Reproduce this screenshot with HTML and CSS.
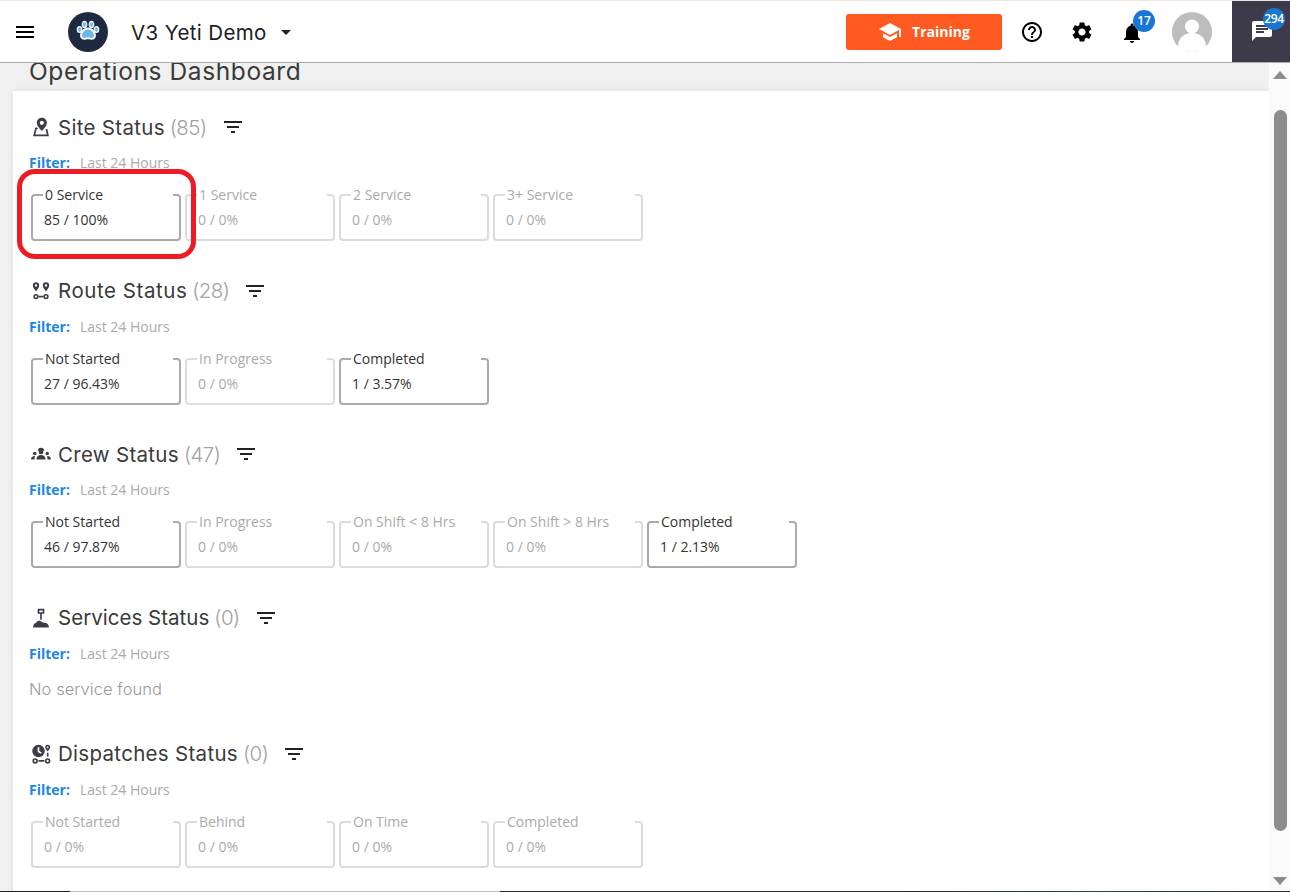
FILE: index.html
```html
<!DOCTYPE html>
<html lang="en">
<head>
<meta charset="utf-8">
<title>Operations Dashboard</title>
<link rel="stylesheet" href="styles.css">
</head>
<body>
<div class="app">
  <header class="topbar">
    <div class="brand">
      <svg class="icon menu-icon" viewBox="0 0 24 24"><path d="M3 18h18v-2H3v2zm0-5h18v-2H3v2zm0-7v2h18V6H3z"/></svg>
      <svg class="logo" viewBox="0 0 40 40"><circle cx="20" cy="20" r="20" fill="#1e2a40"/><g fill="#f4f8fb"><ellipse cx="11.500" cy="17.500" rx="2.800" ry="3.600"/><ellipse cx="16.500" cy="12.500" rx="2.800" ry="3.800"/><ellipse cx="23.500" cy="12.500" rx="2.800" ry="3.800"/><ellipse cx="28.500" cy="17.500" rx="2.800" ry="3.600"/><path d="M20 15.500c-4.500 0-8 4.500-8 8 0 3.500 3.500 5 6 4 1.300-.5 2.700-.5 4 0 2.500 1 6 -.5 6-4 0-3.500-3.500-8-8-8z"/></g><g fill="#6cb9ea"><ellipse cx="11.500" cy="17.500" rx="1.500" ry="2.200"/><ellipse cx="16.500" cy="12.500" rx="1.500" ry="2.400"/><ellipse cx="23.500" cy="12.500" rx="1.500" ry="2.400"/><ellipse cx="28.500" cy="17.500" rx="1.500" ry="2.200"/><path d="M20 17.500c-3.400 0-6 3.400-6 6 0 2.200 2.200 2.800 3.500 2.200 1.600-.7 3.400-.7 5 0 1.300.6 3.500 0 3.500-2.200 0-2.600-2.600-6-6-6z"/></g></svg>
      <span class="org-name">V3 Yeti Demo</span>
      <span class="caret"></span>
    </div>
    <div class="actions">
      <button class="training" type="button">
        <svg class="hat" viewBox="0 0 24 24"><path d="M5 13.18v4L12 21l7-3.820v-4L12 17l-7-3.820zM12 3L1 9l11 6 9-4.910V17h2V9L12 3z"/></svg>
        <span>Training</span>
      </button>
      <svg class="icon action-icon" viewBox="0 0 24 24"><path d="M11 18h2v-2h-2v2zm1-16C6.480 2 2 6.480 2 12s4.480 10 10 10 10-4.480 10-10S17.520 2 12 2zm0 18c-4.410 0-8-3.590-8-8s3.590-8 8-8 8 3.590 8 8-3.590 8-8 8zm0-14c-2.210 0-4 1.790-4 4h2c0-1.100.9-2 2-2s2 .9 2 2c0 2-3 1.750-3 5h2c0-2.250 3-2.500 3-5 0-2.210-1.790-4-4-4z"/></svg>
      <svg class="icon action-icon" viewBox="0 0 24 24"><path d="M19.140 12.940c.04-.3.060-.61.060-.94 0-.32-.02-.64-.07-.94l2.030-1.580c.18-.14.23-.41.120-.61l-1.920-3.320c-.12-.22-.37-.29-.59-.22l-2.390.96c-.5-.38-1.030-.7-1.620-.94l-.36-2.540c-.04-.24-.24-.41-.48-.41h-3.840c-.24 0-.43.170-.47.410l-.36 2.540c-.59.24-1.130.57-1.620.94l-2.390-.96c-.22-.08-.47 0-.59.220L2.740 8.870c-.12.210-.08.470.12.610l2.030 1.580c-.05.3-.09.630-.09.940s.02.640.07.940l-2.030 1.580c-.18.140-.23.410-.12.610l1.920 3.320c.12.220.37.290.59.220l2.390-.96c.5.380 1.030.7 1.620.94l.36 2.540c.05.240.24.410.48.410h3.840c.24 0 .44-.17.47-.41l.36-2.540c.59-.24 1.130-.56 1.620-.94l2.390.96c.22.080.47 0 .59-.22l1.920-3.320c.12-.22.070-.47-.12-.61l-2.010-1.580zM12 15.600c-1.980 0-3.600-1.620-3.600-3.600s1.620-3.600 3.600-3.600 3.600 1.620 3.600 3.600-1.620 3.600-3.600 3.600z"/></svg>
      <span class="bell">
        <svg class="icon action-icon" viewBox="0 0 24 24"><path d="M12 22c1.100 0 2-.9 2-2h-4c0 1.100.89 2 2 2zm6-6v-5c0-3.070-1.640-5.640-4.500-6.320V4c0-.83-.67-1.500-1.500-1.500s-1.500.67-1.500 1.500v.68C7.630 5.360 6 7.920 6 11v5l-2 2v1h16v-1l-2-2z"/></svg>
        <span class="badge bell-badge">17</span>
      </span>
      <svg class="avatar" viewBox="0 0 40 40"><circle cx="20" cy="20" r="20" fill="#bdbdbd"/><circle cx="20" cy="14.500" r="7" fill="#fff"/><path d="M6 35c0-9 6-14 14-14s14 5 14 14c-3.600 3.200-8.500 5-14 5S9.600 38.200 6 35z" fill="#fff"/></svg>
      <div class="chat">
        <svg class="chat-icon" viewBox="0 0 24 24"><path d="M20 2H4c-1.100 0-1.990.9-1.990 2L2 22l4-4h14c1.100 0 2-.9 2-2V4c0-1.100-.9-2-2-2zM6 9h12v2H6V9zm8 5H6v-2h8v2zm4-6H6V6h12v2z"/></svg>
        <span class="badge chat-badge">294</span>
      </div>
    </div>
  </header>

  <div class="body">
    <main class="content">
      <h1 class="page-title">Operations Dashboard</h1>
      <div class="card">
        <section class="section">
          <h2 class="section-head">
            <svg class="sec-icon" viewBox="0 0 24 24"><path fill-rule="evenodd" d="M13 1c-3.300 0-6 2.500-6 5.800 0 3.700 3.800 7.600 6 10 2.200-2.400 6-6.300 6-10C19 3.500 16.300 1 13 1zm0 3.500a2.500 2.500 0 1 1 0 5 2.500 2.500 0 0 1 0-5z"/><path d="M5.200 12.500 2.500 23h19l-1.900-8.500h-2.100l1.400 6.500H5.200l1.600-6.500H8.500l-1-2z"/></svg>
            <span>Site Status</span> <span class="count">(85)</span>
            <svg class="filter-icon" viewBox="0 0 24 24"><path d="M10 18h4v-2h-4v2zM3 6v2h18V6H3zm3 7h12v-2H6v2z"/></svg>
          </h2>
          <p class="filter"><b>Filter:</b><span>Last 24 Hours</span></p>
          <div class="boxes">
            <fieldset class="box on"><legend>0 Service</legend><div>85 / 100%</div></fieldset>
            <fieldset class="box"><legend>1 Service</legend><div>0 / 0%</div></fieldset>
            <fieldset class="box"><legend>2 Service</legend><div>0 / 0%</div></fieldset>
            <fieldset class="box"><legend>3+ Service</legend><div>0 / 0%</div></fieldset>
          </div>
          <div class="highlight"></div>
        </section>

        <section class="section">
          <h2 class="section-head head-wide">
            <svg class="sec-icon" viewBox="0 0 24 24"><path fill-rule="evenodd" d="M6 1.500a3.800 3.800 0 0 0-3.800 3.800C2.200 8 5 10.500 6 12.500c1-2 3.800-4.500 3.800-7.200A3.800 3.800 0 0 0 6 1.500zm0 2.400a1.400 1.400 0 1 1 0 2.800 1.400 1.400 0 0 1 0-2.800zM18 1.500a3.800 3.800 0 0 0-3.800 3.800c0 2.700 2.800 5.200 3.800 7.200 1-2 3.800-4.500 3.800-7.200A3.800 3.800 0 0 0 18 1.500zm0 2.400a1.400 1.400 0 1 1 0 2.800 1.400 1.400 0 0 1 0-2.800zM6 15.500a3.200 3.200 0 1 0 0 6.400 3.200 3.200 0 0 0 0-6.400zm0 1.900a1.300 1.300 0 1 1 0 2.600 1.300 1.300 0 0 1 0-2.600zM18 15.500a3.200 3.200 0 1 0 0 6.400 3.200 3.200 0 0 0 0-6.400zm0 1.900a1.300 1.300 0 1 1 0 2.600 1.300 1.300 0 0 1 0-2.600z"/><path d="M9 17.700h6v2H9z"/></svg>
            <span>Route Status</span> <span class="count">(28)</span>
            <svg class="filter-icon" viewBox="0 0 24 24"><path d="M10 18h4v-2h-4v2zM3 6v2h18V6H3zm3 7h12v-2H6v2z"/></svg>
          </h2>
          <p class="filter"><b>Filter:</b><span>Last 24 Hours</span></p>
          <div class="boxes">
            <fieldset class="box on"><legend>Not Started</legend><div>27 / 96.43%</div></fieldset>
            <fieldset class="box"><legend>In Progress</legend><div>0 / 0%</div></fieldset>
            <fieldset class="box on"><legend>Completed</legend><div>1 / 3.57%</div></fieldset>
          </div>
        </section>

        <section class="section">
          <h2 class="section-head">
            <svg class="sec-icon" viewBox="0 0 24 24"><circle cx="12" cy="9.500" r="2.900"/><path d="M6.500 18.500c0-3.200 2.200-5.300 5.500-5.300s5.500 2.100 5.500 5.300z"/><circle cx="4.500" cy="11.500" r="2.100"/><circle cx="19.500" cy="11.500" r="2.100"/><path d="M0 18.500c0-2.500 1.500-4.200 4.800-4.200-.5 1.200-.6 2.700-.6 4.200zM24 18.500c0-2.500-1.500-4.200-4.800-4.200.5 1.200.6 2.700.6 4.200z"/><path d="M8.300 7.500a3.700 3 0 0 1 7.400 0l1 .6H7.300z"/></svg>
            <span>Crew Status</span> <span class="count">(47)</span>
            <svg class="filter-icon" viewBox="0 0 24 24"><path d="M10 18h4v-2h-4v2zM3 6v2h18V6H3zm3 7h12v-2H6v2z"/></svg>
          </h2>
          <p class="filter"><b>Filter:</b><span>Last 24 Hours</span></p>
          <div class="boxes">
            <fieldset class="box on"><legend>Not Started</legend><div>46 / 97.87%</div></fieldset>
            <fieldset class="box"><legend>In Progress</legend><div>0 / 0%</div></fieldset>
            <fieldset class="box"><legend>On Shift &lt; 8 Hrs</legend><div>0 / 0%</div></fieldset>
            <fieldset class="box"><legend>On Shift &gt; 8 Hrs</legend><div>0 / 0%</div></fieldset>
            <fieldset class="box on"><legend>Completed</legend><div>1 / 2.13%</div></fieldset>
          </div>
        </section>

        <section class="section section-empty">
          <h2 class="section-head head-tight">
            <svg class="sec-icon" viewBox="0 0 24 24"><path fill-rule="evenodd" d="M8 1h8v6h-3v7h-2V7H8zm2 2v2h4V3z"/><path d="M2.500 23.500c0-3.500 1.500-5.500 4-6.200C7.500 15.500 9 15 11 15.500l3 1.500c1 .5 2 .5 3 .8 2.500.6 4.500 2.200 4.500 5.700z"/></svg>
            <span>Services Status</span> <span class="count">(0)</span>
            <svg class="filter-icon" viewBox="0 0 24 24"><path d="M10 18h4v-2h-4v2zM3 6v2h18V6H3zm3 7h12v-2H6v2z"/></svg>
          </h2>
          <p class="filter"><b>Filter:</b><span>Last 24 Hours</span></p>
          <p class="empty">No service found</p>
        </section>

        <section class="section">
          <h2 class="section-head">
            <svg class="sec-icon" viewBox="0 0 24 24"><path fill-rule="evenodd" d="M9 1a7.500 7.500 0 1 0 0 15A7.500 7.500 0 0 0 9 1zM8 4h2v4.500l3 1.800-1 1.500L8 9.500z"/><path fill-rule="evenodd" d="M20 1a3 3 0 0 0-3 3c0 1.900 2 3.700 3 5 1-1.300 3-3.100 3-5a3 3 0 0 0-3-3zm0 1.900a1.100 1.100 0 1 1 0 2.200 1.100 1.100 0 0 1 0-2.200zM5 17a3.300 3.300 0 1 0 0 6.600A3.300 3.300 0 0 0 5 17zm0 2a1.300 1.300 0 1 1 0 2.600A1.300 1.300 0 0 1 5 19zM20 17a3.300 3.300 0 1 0 0 6.600 3.300 3.300 0 0 0 0-6.600zm0 2a1.300 1.300 0 1 1 0 2.600 1.300 1.300 0 0 1 0-2.600zM19 10.500h2V15h-2zM9 19.300h7v2H9z"/></svg>
            <span>Dispatches Status</span> <span class="count">(0)</span>
            <svg class="filter-icon" viewBox="0 0 24 24"><path d="M10 18h4v-2h-4v2zM3 6v2h18V6H3zm3 7h12v-2H6v2z"/></svg>
          </h2>
          <p class="filter"><b>Filter:</b><span>Last 24 Hours</span></p>
          <div class="boxes">
            <fieldset class="box"><legend>Not Started</legend><div>0 / 0%</div></fieldset>
            <fieldset class="box"><legend>Behind</legend><div>0 / 0%</div></fieldset>
            <fieldset class="box"><legend>On Time</legend><div>0 / 0%</div></fieldset>
            <fieldset class="box"><legend>Completed</legend><div>0 / 0%</div></fieldset>
          </div>
        </section>
      </div>
    </main>
    <aside class="scrollbar">
      <span class="arrow-up"></span>
      <span class="thumb"></span>
      <span class="arrow-down"></span>
    </aside>
  </div>
  <div class="taskbar-edge"></div>
</div>
</body>
</html>
```

FILE: styles.css
```css
* { box-sizing: border-box; }
html, body { margin: 0; height: 100%; overflow: hidden; }
body { font-family: "Open Sans", "Liberation Sans", sans-serif; font-size: 14px; color: #333; background: #fff; }
.app { display: flex; flex-direction: column; height: 892px; border-top: 1px solid #e8e8e0; }
.taskbar-edge { flex: 0 0 1px; background: linear-gradient(to right, #222 70px, #bbb 70px, #bbb 500px, #2a2a2a 500px, #2a2a2a 900px, #34434a 1100px, #2a2a2a); }
.topbar { flex: 0 0 62px; display: flex; justify-content: space-between; align-items: center; background: #fff; border-bottom: 1px solid #aaa; position: relative; z-index: 2; }
.brand { display: flex; align-items: center; padding-left: 13px; }
.icon { display: block; fill: #000; }
.menu-icon { width: 24px; height: 24px; }
.logo { width: 40px; height: 40px; margin-left: 31px; }
.org-name { margin: 2px 0 0 23px; font-family: Inter, "Liberation Sans", sans-serif; font-size: 20.500px; color: #1c1c28; letter-spacing: .37px; }
.caret { margin-left: 14px; margin-top: 2px; width: 0; height: 0; border-left: 5px solid transparent; border-right: 5px solid transparent; border-top: 5px solid #222; }
.actions { display: flex; align-items: center; height: 100%; }
.training { width: 156px; height: 36px; display: flex; align-items: center; justify-content: center; gap: 10px; border: 0; border-radius: 3px; background: #ff5a22; color: #fff; font: 700 14px "Open Sans", sans-serif; padding: 0; margin-right: 18px; }
.hat { width: 24px; height: 24px; fill: #fff; }
.action-icon { width: 24px; height: 24px; }
.actions > .action-icon { margin-right: 26px; }
.bell { position: relative; display: block; margin-right: 28px; margin-top: 2px; }
.badge { position: absolute; width: 22px; height: 22px; border-radius: 50%; background: #1976d2; color: #fff; font-size: 12px; font-weight: 600; line-height: 22px; text-align: center; }
.bell-badge { left: 13px; top: -11px; }
.avatar { width: 40px; height: 40px; margin-right: 20px; }
.chat { position: relative; width: 58px; height: 100%; background: #3d3b49; }
.chat-icon { position: absolute; left: 18px; top: 18px; width: 24px; height: 24px; fill: #fff; }
.chat-badge { left: 31px; top: 7px; letter-spacing: -.3px; }
.body { flex: 1; display: flex; min-height: 0; }
.content { flex: 1; min-width: 0; background: #f0f0f0; overflow: hidden; display: flex; flex-direction: column; }
.page-title { flex: none; margin: -6px 0 0 29px; height: 34px; font-family: Inter, "Liberation Sans", sans-serif; font-size: 24.500px; font-weight: 400; line-height: 28px; color: #3a3a3a; letter-spacing: .6px; white-space: nowrap; }
.card { flex: 1 0 auto; margin-left: 13px; padding: 22px 0 0 18px; background: #fff; box-shadow: 0 0 6px rgba(0,0,0,.08); }
.section { position: relative; height: 163.670px; }
.section-empty { height: 136px; }
.section-head { display: flex; align-items: center; height: 28px; margin: 0; font-family: Inter, "Liberation Sans", sans-serif; font-size: 20.500px; font-weight: 400; color: #3a3a3a; letter-spacing: .3px; white-space: pre; }
.head-wide { letter-spacing: .55px; }
.head-tight { letter-spacing: .02px; }
.sec-icon { width: 20px; height: 20px; margin-right: 7px; fill: #3d3d4a; flex: none; }
.count { color: #a2a2a2; margin-left: 5px; font-weight: 300; letter-spacing: -.55px; }
.filter-icon { width: 24px; height: 24px; margin-left: 14px; fill: #222; flex: none; }
.filter { display: flex; gap: 10px; height: 20px; margin: 12px 0 0 -2px; line-height: 20px; color: #aaa; }
.filter b { color: #1a86e8; font-weight: 700; }
.boxes { display: flex; gap: 4px; margin-top: 12px; }
.box { width: 150px; height: 56px; margin: 0; padding: 5px 11px 0; border: 2px solid #dcdcdc; border-radius: 4px; color: #aaa; line-height: 20px; min-width: 0; }
.box.on { border-color: #aaa; color: #333; }
.box legend { width: 130px; margin-left: -1px; padding: 0 0 0 2px; line-height: 20px; }
.empty { margin: 14px 0 0 -2px; font-family: Inter, "Liberation Sans", sans-serif; font-size: 16.500px; font-weight: 300; line-height: 22px; color: #999; letter-spacing: .06px; }
.highlight { position: absolute; left: -14px; top: 56px; width: 179px; height: 90px; border: 5px solid #ed1c24; border-radius: 18px; }
.scrollbar { position: relative; flex: 0 0 21px; background: #fafafa; }
.arrow-up { position: absolute; left: 4px; top: 8px; border-left: 7.500px solid transparent; border-right: 7.500px solid transparent; border-bottom: 8px solid #8c8c8c; }
.arrow-down { position: absolute; left: 4px; bottom: 6px; border-left: 7.500px solid transparent; border-right: 7.500px solid transparent; border-top: 8px solid #8c8c8c; }
.thumb { position: absolute; left: 5px; top: 47px; width: 13px; height: 721px; border-radius: 7px; background: #8c8c8c; }
```
